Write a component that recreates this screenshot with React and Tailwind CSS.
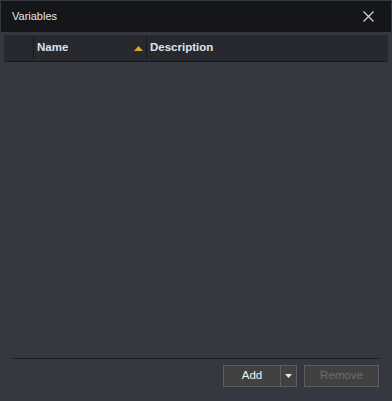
import React from 'react'

const FONT = { fontFamily: '"Liberation Sans", "DejaVu Sans", Arial, sans-serif' }

// ── Title bar ──────────────────────────────────────────────
function TitleBar() {
  return (
    <div className="h-[31px] bg-[#15161a] flex items-center justify-between pl-[11px] pr-[17px] shrink-0">
      <span className="text-[11px] text-[#e6e6e6]">Variables</span>
      <svg width="11" height="11" viewBox="0 0 11 11" className="text-[#d6d6d6]">
        <path d="M0.5 0.5 L10.5 10.5 M10.5 0.5 L0.5 10.5" stroke="currentColor" strokeWidth="1.2" fill="none" />
      </svg>
    </div>
  )
}

// ── Table header ───────────────────────────────────────────
function Separator() {
  return <div className="w-px h-[22px] bg-[#18191c] shrink-0" />
}

function TableHeader() {
  return (
    <div className="h-[27px] bg-[#27292e] border-b border-[#17181b] flex items-center text-[11.5px] font-bold text-[#dde3ee]">
      <div className="w-[29px] shrink-0" />
      <Separator />
      <div className="w-[112px] shrink-0 flex items-center justify-between pl-[3px] pr-[3px]">
        <span>Name</span>
        <svg width="9" height="5" viewBox="0 0 9 5">
          <path d="M4.5 0 L9 5 L0 5 Z" fill="#e0a62a" />
        </svg>
      </div>
      <Separator />
      <div className="pl-[3px]">Description</div>
    </div>
  )
}

// ── Footer buttons ─────────────────────────────────────────
function Footer() {
  return (
    <div className="shrink-0">
      <div className="mx-[12px] border-t border-[#1d1e22]" />
      <div className="flex justify-end gap-[7px] pr-[12px] mt-[6px] mb-[13px]">
        <div className="flex h-[22px] border border-[#5c5c5c] bg-[#414141]">
          <button className="w-[57px] text-[11.5px] text-[#f2f2f2] border-r border-[#5c5c5c]">Add</button>
          <button className="w-[15px] flex items-center justify-center">
            <svg width="7" height="4" viewBox="0 0 7 4">
              <path d="M0 0 L7 0 L3.5 4 Z" fill="#e8e8e8" />
            </svg>
          </button>
        </div>
        <button className="w-[75px] h-[22px] border border-[#5c5c5c] bg-[#414141] text-[11.5px] text-[#6e6e6e]">
          Remove
        </button>
      </div>
    </div>
  )
}

export default function App() {
  return (
    <div style={FONT} className="w-[392px] h-[401px] bg-[#353841] p-px flex flex-col overflow-hidden">
      <TitleBar />
      <div className="px-[3px] pt-[3px] shrink-0">
        <TableHeader />
      </div>
      <div className="flex-1" />
      <Footer />
    </div>
  )
}
